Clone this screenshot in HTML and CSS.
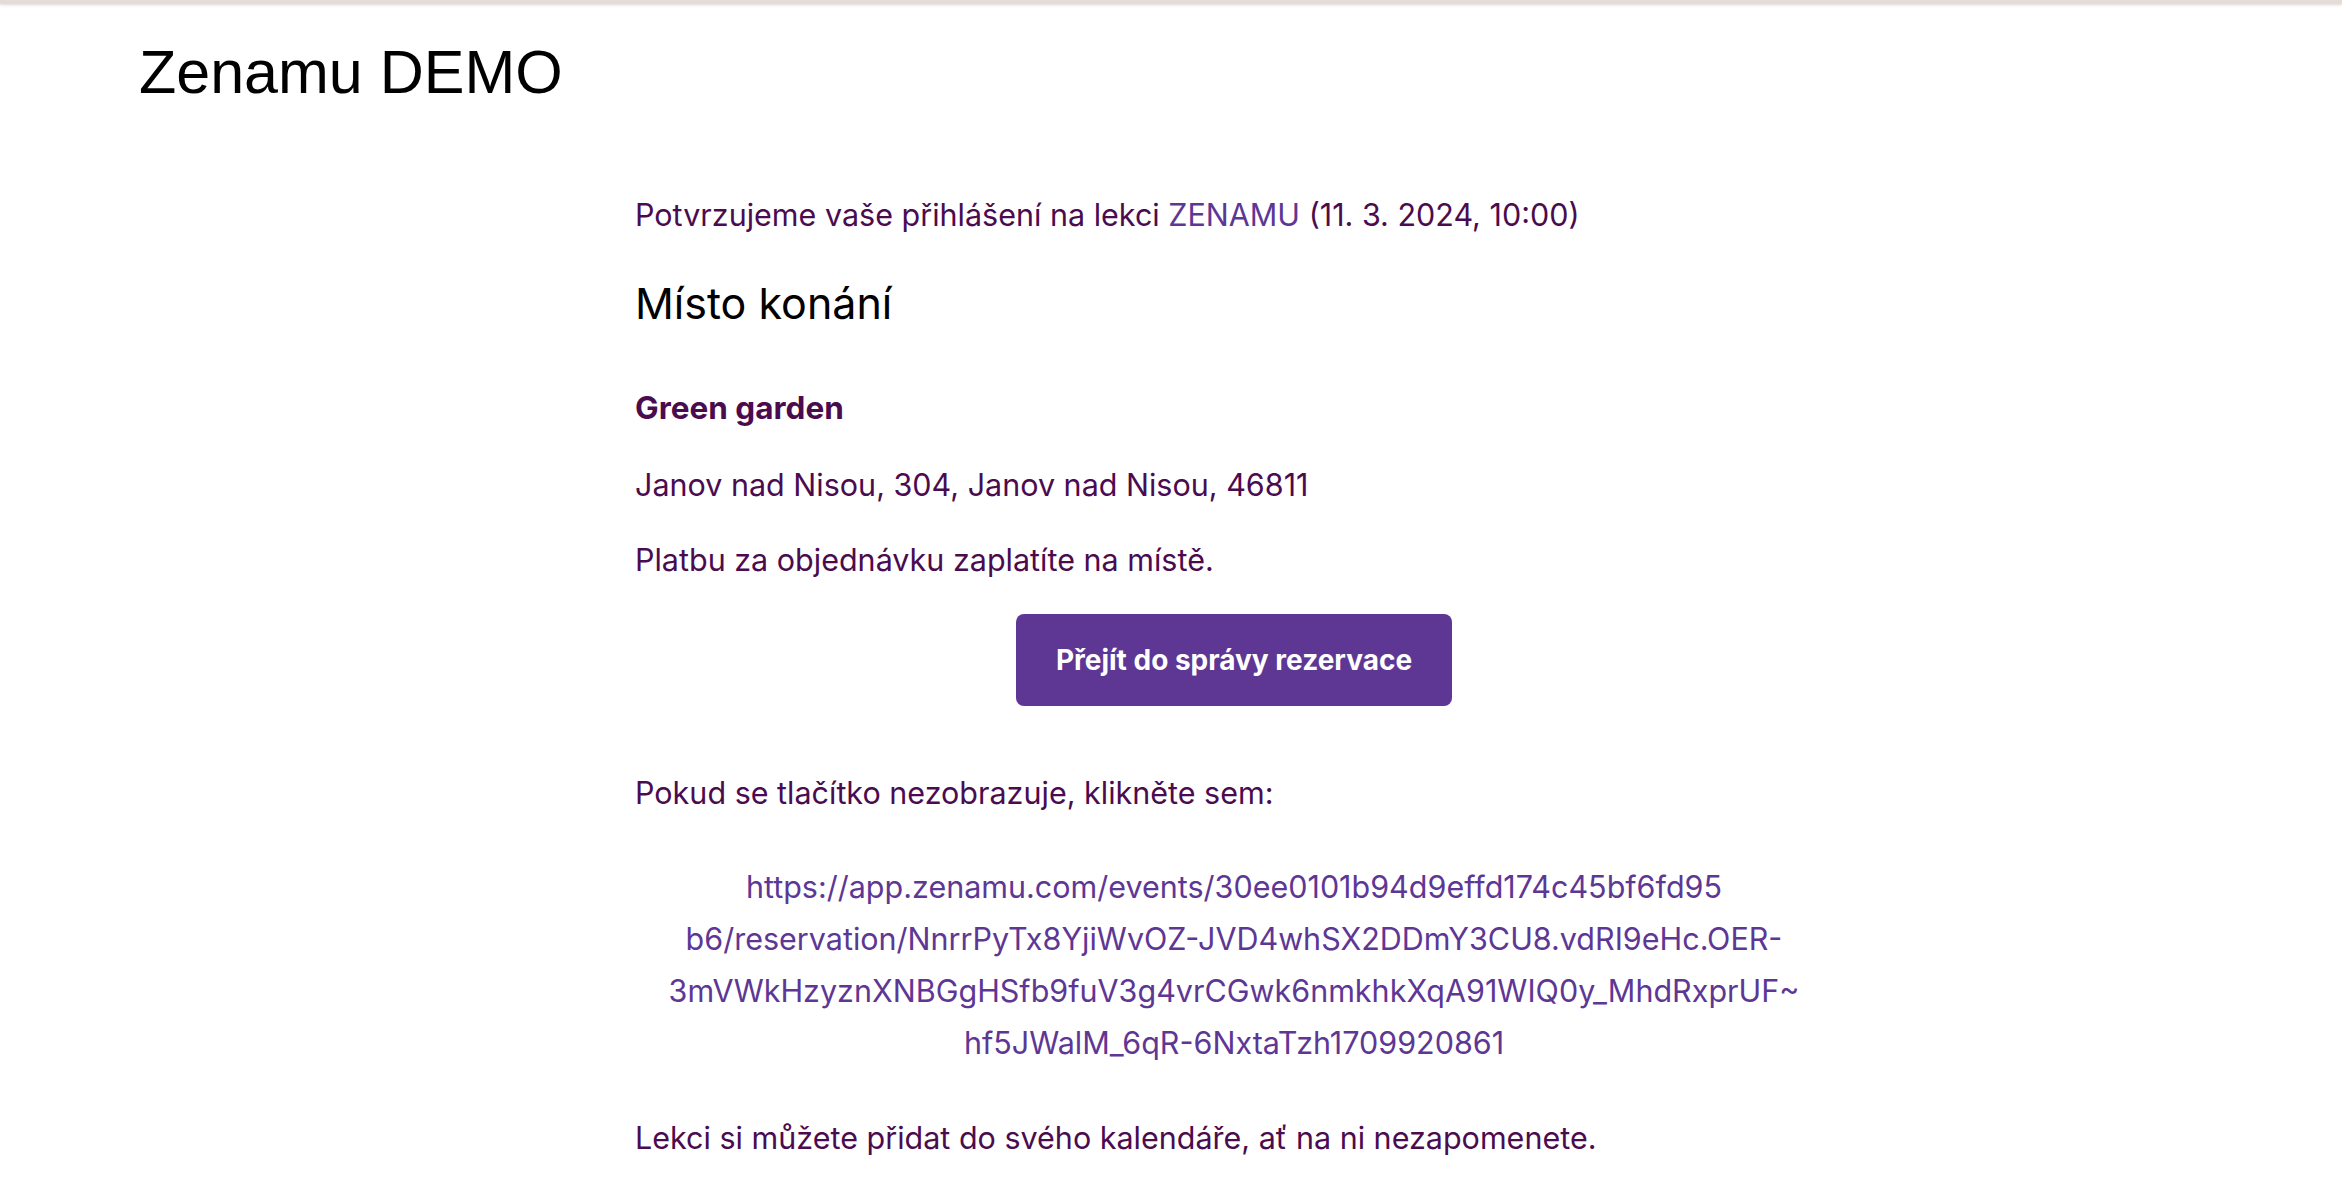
FILE: index.html
```html
<!DOCTYPE html>
<html lang="cs">
<head>
    <meta charset="UTF-8">
    <meta name="viewport" content="width=device-width, initial-scale=1.0">
    <title>Zenamu DEMO</title>
    <link rel="stylesheet" href="styles.css">
</head>
<body>

    <div class="topbar"></div>

    <h1 class="title">Zenamu DEMO</h1>

    <!-- Reservation confirmation -->
    <div class="mail">
        <p class="intro">Potvrzujeme vaše přihlášení na lekci <a href="#" class="link">ZENAMU</a> (11. 3. 2024, 10:00)</p>

        <h2 class="place-title">Místo konání</h2>
        <p class="place-name">Green garden</p>
        <p class="address">Janov nad Nisou, 304, Janov nad Nisou, 46811</p>
        <p class="payment">Platbu za objednávku zaplatíte na místě.</p>

        <div class="button-row">
            <a href="#" class="button">Přejít do správy rezervace</a>
        </div>

        <p class="fallback">Pokud se tlačítko nezobrazuje, klikněte sem:</p>
        <p class="url">
            <a href="#" class="link">https://app.zenamu.com/events/30ee0101b94d9effd174c45bf6fd95<br>b6/reservation/NnrrPyTx8YjiWvOZ-JVD4whSX2DDmY3CU8.vdRI9eHc.OER-<br>3mVWkHzyznXNBGgHSfb9fuV3g4vrCGwk6nmkhkXqA91WIQ0y_MhdRxprUF~<br>hf5JWalM_6qR-6NxtaTzh1709920861</a>
        </p>

        <p class="calendar">Lekci si můžete přidat do svého kalendáře, ať na ni nezapomenete.</p>
    </div>

</body>
</html>
```

FILE: styles.css
```css
body {
    margin: 0;
    background-color: #fff;
    font-family: Inter, "Noto Sans", sans-serif;
    color: #4b0c4f;
}
.topbar {
    height: 4px;
    background-color: #e3dcd8;
    box-shadow: 0 1px 3px rgba(120, 100, 90, 0.25);
}
.title {
    margin: 38px 0 0 139px;
    font-family: "Liberation Sans", Arial, sans-serif;
    font-size: 61px;
    font-weight: normal;
    line-height: 1;
    color: #000;
}
.mail {
    margin: 0 0 0 635px;
    width: 1198px;
    font-size: 30.5px;
    line-height: 40px;
}
.mail p {
    margin: 0;
}
.link {
    color: #5e3795;
    text-decoration: none;
}
.intro {
    padding-top: 92px;
}
.place-title {
    margin: 43px 0 0;
    font-size: 43px;
    font-weight: normal;
    line-height: 1.2;
    color: #000;
}
.mail .place-name {
    margin-top: 55px;
    font-size: 31.5px;
    font-weight: 700;
    line-height: 45px;
}
.mail .address {
    margin-top: 35px;
}
.mail .payment {
    margin-top: 35px;
}
.button-row {
    margin-top: 34px;
    text-align: center;
}
.button {
    display: inline-block;
    height: 92px;
    padding: 0 40px;
    line-height: 92px;
    font-size: 28px;
    font-weight: 700;
    color: #fff;
    background-color: #5e3795;
    border-radius: 8px;
    text-decoration: none;
}
.mail .fallback {
    margin-top: 67px;
}
.mail .url {
    margin-top: 48px;
    line-height: 52px;
    text-align: center;
}
.mail .calendar {
    margin-top: 49px;
}
```
